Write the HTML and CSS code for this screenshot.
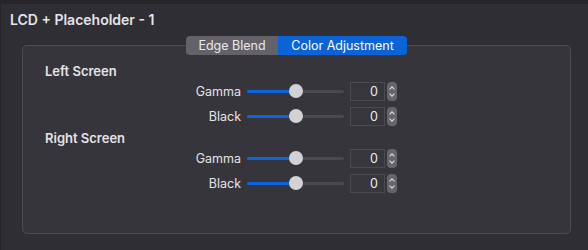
FILE: index.html
```html
<!DOCTYPE html>
<html lang="en">
	<head>
		<meta charset="utf-8">
		<title>LCD + Placeholder - 1</title>
		<link rel="stylesheet" href="styles.css">
	</head>
	<body>
		<div class="window">
			<div class="topbar"></div>
			<h1 class="title">LCD + Placeholder - 1</h1>

			<div class="group">
				<div class="segmented">
					<span class="seg">Edge Blend</span>
					<span class="seg seg-on">Color Adjustment</span>
				</div>

				<h2 class="section">Left Screen</h2>
				<div class="row">
					<span class="label">Gamma</span>
					<div class="slider"><div class="fill" style="width: 50%"></div><div class="knob" style="left: 50%"></div></div>
					<div class="field">0</div>
					<div class="stepper"><span class="up"></span><span class="down"></span></div>
				</div>
				<div class="row">
					<span class="label">Black</span>
					<div class="slider"><div class="fill" style="width: 50%"></div><div class="knob" style="left: 50%"></div></div>
					<div class="field">0</div>
					<div class="stepper"><span class="up"></span><span class="down"></span></div>
				</div>

				<h2 class="section section-next">Right Screen</h2>
				<div class="row">
					<span class="label">Gamma</span>
					<div class="slider"><div class="fill" style="width: 50%"></div><div class="knob" style="left: 50%"></div></div>
					<div class="field">0</div>
					<div class="stepper"><span class="up"></span><span class="down"></span></div>
				</div>
				<div class="row">
					<span class="label">Black</span>
					<div class="slider"><div class="fill" style="width: 50%"></div><div class="knob" style="left: 50%"></div></div>
					<div class="field">0</div>
					<div class="stepper"><span class="up"></span><span class="down"></span></div>
				</div>
			</div>
		</div>
	</body>
</html>
```

FILE: styles.css
```css
body{
	margin: 0;
	background: #302e35;
	font-family: "Inter", "Liberation Sans", sans-serif;
	color: #e6e6e8;
}

.window{
	height: 250px;
	border-left: 1px solid #26252a;
	box-sizing: border-box;
	overflow: hidden;
}

.topbar{
	height: 4px;
	background: #26252a;
}

.title{
	margin: 7px 0 0 9px;
	font-size: 14px;
	font-weight: 600;
	line-height: 17px;
	color: #e4e4e6;
}

/*caixa com as abas*/
.group{
	margin: 17px 0 0 21px;
	width: 549px;
	height: 189px;
	box-sizing: border-box;
	border: 1px solid #4e4c53;
	border-radius: 5px;
	background: #37353c;
	display: flex;
	flex-direction: column;
}

.segmented{
	align-self: center;
	margin-top: -10px;
	display: flex;
	height: 19px;
	border-radius: 4px;
	overflow: hidden;
	font-size: 12.5px;
	line-height: 19px;
}

.seg{
	width: 92px;
	text-align: center;
	background: #646268;
	color: #e8e8ea;
}

.seg-on{
	width: 129px;
	background: #0b63d8;
	color: #fff;
}

.section{
	margin: 8px 0 0 22px;
	font-size: 13px;
	font-weight: 600;
	line-height: 16px;
	color: #e4e4e6;
}

.section-next{
	margin-top: 1px;
}

.row{
	display: flex;
	align-items: center;
	height: 25px;
	padding-left: 22px;
	font-size: 12.5px;
}

.label{
	width: 196px;
	text-align: right;
	color: #e4e4e6;
}

/*slider*/
.slider{
	position: relative;
	margin-left: 6px;
	width: 97px;
	height: 3px;
	border-radius: 2px;
	background: #4b4950;
}

.fill{
	height: 3px;
	border-radius: 2px;
	background: #0b63e0;
}

.knob{
	position: absolute;
	top: -6px;
	width: 14px;
	height: 14px;
	margin-left: -7px;
	border-radius: 50%;
	background: #d2d2d4;
}

.field{
	margin-left: 6px;
	width: 35px;
	height: 19px;
	box-sizing: border-box;
	border: 1px solid #4c4a51;
	background: #38363d;
	text-align: right;
	padding-right: 6px;
	line-height: 17px;
	font-size: 12.5px;
	color: #ececee;
}

.stepper{
	margin-left: 2px;
	width: 10px;
	height: 19px;
	border-radius: 4px;
	background: #67656b;
	display: flex;
	flex-direction: column;
	align-items: center;
	justify-content: center;
	gap: 3px;
}

.up, .down{
	width: 3px;
	height: 3px;
	border-left: 1px solid #e4e4e6;
	border-top: 1px solid #e4e4e6;
}

.up{
	transform: translateY(1px) rotate(45deg);
}

.down{
	transform: translateY(-1px) rotate(225deg);
}
```
